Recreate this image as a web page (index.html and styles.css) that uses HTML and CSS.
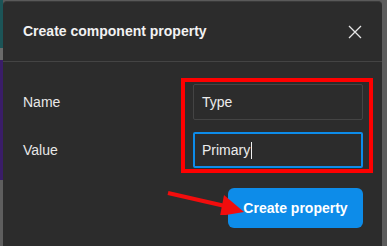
FILE: index.html
```html
<!DOCTYPE html>
<html lang="en">
<head>
    <meta charset="UTF-8">
    <meta name="viewport" content="width=device-width, initial-scale=1.0">
    <title>Create component property</title>
    <link rel="stylesheet" href="styles.css">
</head>
<body>
    <div class="canvas-edge"></div>

    <div class="dialog">
        <div class="dialog-header">
            <h1>Create component property</h1>
            <button class="close-button" aria-label="Close">
                <svg width="14" height="14" viewBox="0 0 14 14">
                    <path d="M1 1 L13 13 M13 1 L1 13" stroke="#e6e6e6" stroke-width="1.3" fill="none"/>
                </svg>
            </button>
        </div>

        <div class="dialog-body">
            <div class="fields">
                <label class="field-label">Name</label>
                <div class="field-input">Type</div>
                <label class="field-label">Value</label>
                <div class="field-input focused">Primary<span class="caret"></span></div>
            </div>
            <div class="actions">
                <button class="primary-button">Create property</button>
            </div>

            <!-- annotations -->
            <div class="highlight-box"></div>
            <svg class="arrow" width="80" height="24" viewBox="0 0 80 24">
                <path d="M1 2 L58 15" stroke="#f20d0d" stroke-width="4" fill="none"/>
                <polygon points="77,21 53,25 57,4" fill="#f20d0d"/>
            </svg>
        </div>
    </div>

    <div class="scroll-edge"></div>
</body>
</html>
```

FILE: styles.css
```css
body {
    font-family: 'Liberation Sans', Arial, sans-serif;
    margin: 0;
    padding: 0;
    height: 246px;
    overflow: hidden;
    display: flex;
    background-color: #5a5a5a;
}
.canvas-edge {
    width: 3px;
    flex-shrink: 0;
    background: linear-gradient(#1c5457 0, #1c5457 48px, #6a6a6a 48px, #6a6a6a 60px, #3a1d68 60px, #3a1d68 180px, #5e5e5e 180px);
}
.scroll-edge {
    flex: 1;
    background-color: #5c5c5c;
}
.dialog {
    width: 379px;
    flex-shrink: 0;
    margin-top: 1px;
    background-color: #2c2c2c;
    border-top: 1px solid #3a3a3a;
    border-radius: 4px 4px 0 0;
}
.dialog-header {
    display: flex;
    align-items: center;
    justify-content: space-between;
    height: 59px;
    padding: 0 20px 0 20px;
    border-bottom: 1px solid #444;
}
.dialog-header h1 {
    margin: 0 0 2px 0;
    font-size: 14px;
    font-weight: bold;
    color: #f2f2f2;
}
.close-button {
    background: none;
    border: none;
    padding: 0;
    width: 14px;
    height: 14px;
    display: flex;
    margin-top: 1px;
}
.dialog-body {
    position: relative;
    padding: 22px 19px 0 20px;
}
.fields {
    display: grid;
    grid-template-columns: 1fr 170px;
    row-gap: 12px;
    align-items: center;
}
.field-label {
    font-size: 14px;
    color: #e8e8e8;
}
.field-input {
    height: 36px;
    box-sizing: border-box;
    display: flex;
    align-items: center;
    padding: 0 8px;
    border: 1px solid #444;
    border-radius: 2px;
    font-size: 14px;
    color: #ececec;
}
.field-input.focused {
    border: 2px solid #0d8ce9;
    padding: 0 7px;
}
.caret {
    display: inline-block;
    width: 1px;
    height: 17px;
    margin-left: 1px;
    background-color: #f0f0f0;
}
.actions {
    display: flex;
    justify-content: flex-end;
    margin-top: 20px;
}
.primary-button {
    height: 40px;
    width: 135px;
    border: none;
    border-radius: 6px;
    background-color: #0d8ce9;
    color: #fff;
    font-family: inherit;
    font-size: 14px;
    font-weight: bold;
}
.highlight-box {
    position: absolute;
    left: 178px;
    top: 16px;
    width: 184px;
    height: 87px;
    border: 4px solid #ff0000;
}
.arrow {
    position: absolute;
    left: 164px;
    top: 129px;
}
```
